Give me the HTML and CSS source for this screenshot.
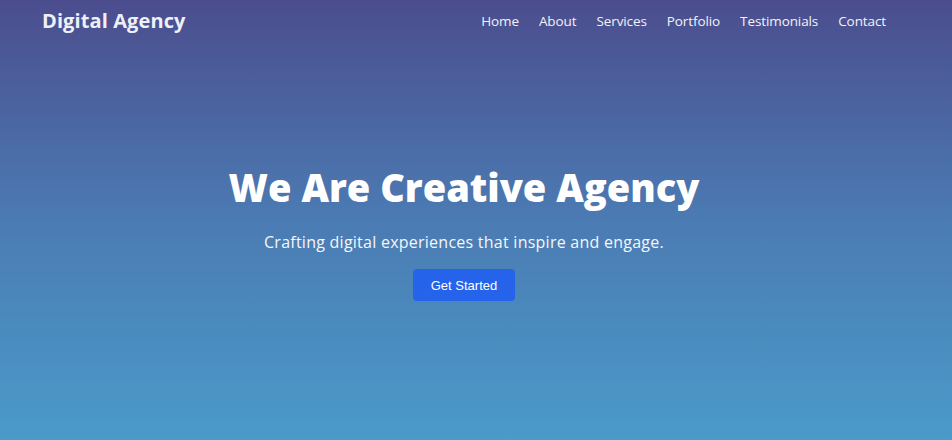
FILE: index.html
```html
<!DOCTYPE html>
<html lang="en">
<head>
<meta charset="utf-8">
<title>Digital Agency</title>
<link rel="stylesheet" href="styles.css">
</head>
<body>
<div class="page">
  <header class="nav">
    <div class="logo">Digital Agency</div>
    <nav class="links">
      <a href="#">Home</a>
      <a href="#">About</a>
      <a href="#">Services</a>
      <a href="#">Portfolio</a>
      <a href="#">Testimonials</a>
      <a href="#">Contact</a>
    </nav>
  </header>
  <section class="hero">
    <h1>We Are Creative Agency</h1>
    <p>Crafting digital experiences that inspire and engage.</p>
    <a class="btn" href="#">Get Started</a>
  </section>
</div>
</body>
</html>
```
FILE: styles.css
```css
html, body { margin: 0; padding: 0; }
body {
  font-family: "Open Sans", "Noto Sans", sans-serif;
  color: #fff;
}
.page {
  height: 440px;
  background: linear-gradient(180deg, #4b4d8e 0%, #4b7bb3 50%, #4a9bc9 100%);
  display: flex;
  flex-direction: column;
}
.nav {
  display: flex;
  justify-content: space-between;
  align-items: center;
  padding: 0 66px 0 42px;
  height: 41px;
}
.logo {
  font-size: 20px;
  font-weight: 700;
  color: #eef0f8;
  letter-spacing: 0.1px;
}
.links {
  display: flex;
  gap: 20px;
}
.links a {
  color: #f2f2f8;
  text-decoration: none;
  font-size: 13.5px;
  font-weight: 500;
  letter-spacing: -0.1px;
}
.hero {
  display: flex;
  flex-direction: column;
  align-items: center;
  padding: 122px 24px 0 0;
}
.hero h1 {
  margin: 0;
  font-size: 38px;
  font-weight: 800;
  line-height: 48px;
  letter-spacing: 0;
}
.hero p {
  margin: 20px 0 0;
  font-size: 16px;
  line-height: 22px;
  color: #f4f6fb;
  letter-spacing: 0.25px;
}
.btn {
  margin-top: 16px;
  width: 102px;
  height: 32px;
  display: flex;
  align-items: center;
  justify-content: center;
  background: #2563eb;
  border-radius: 4px;
  color: #fff;
  text-decoration: none;
  font-family: "Liberation Sans", Arial, sans-serif;
  font-size: 13px;
}
```
